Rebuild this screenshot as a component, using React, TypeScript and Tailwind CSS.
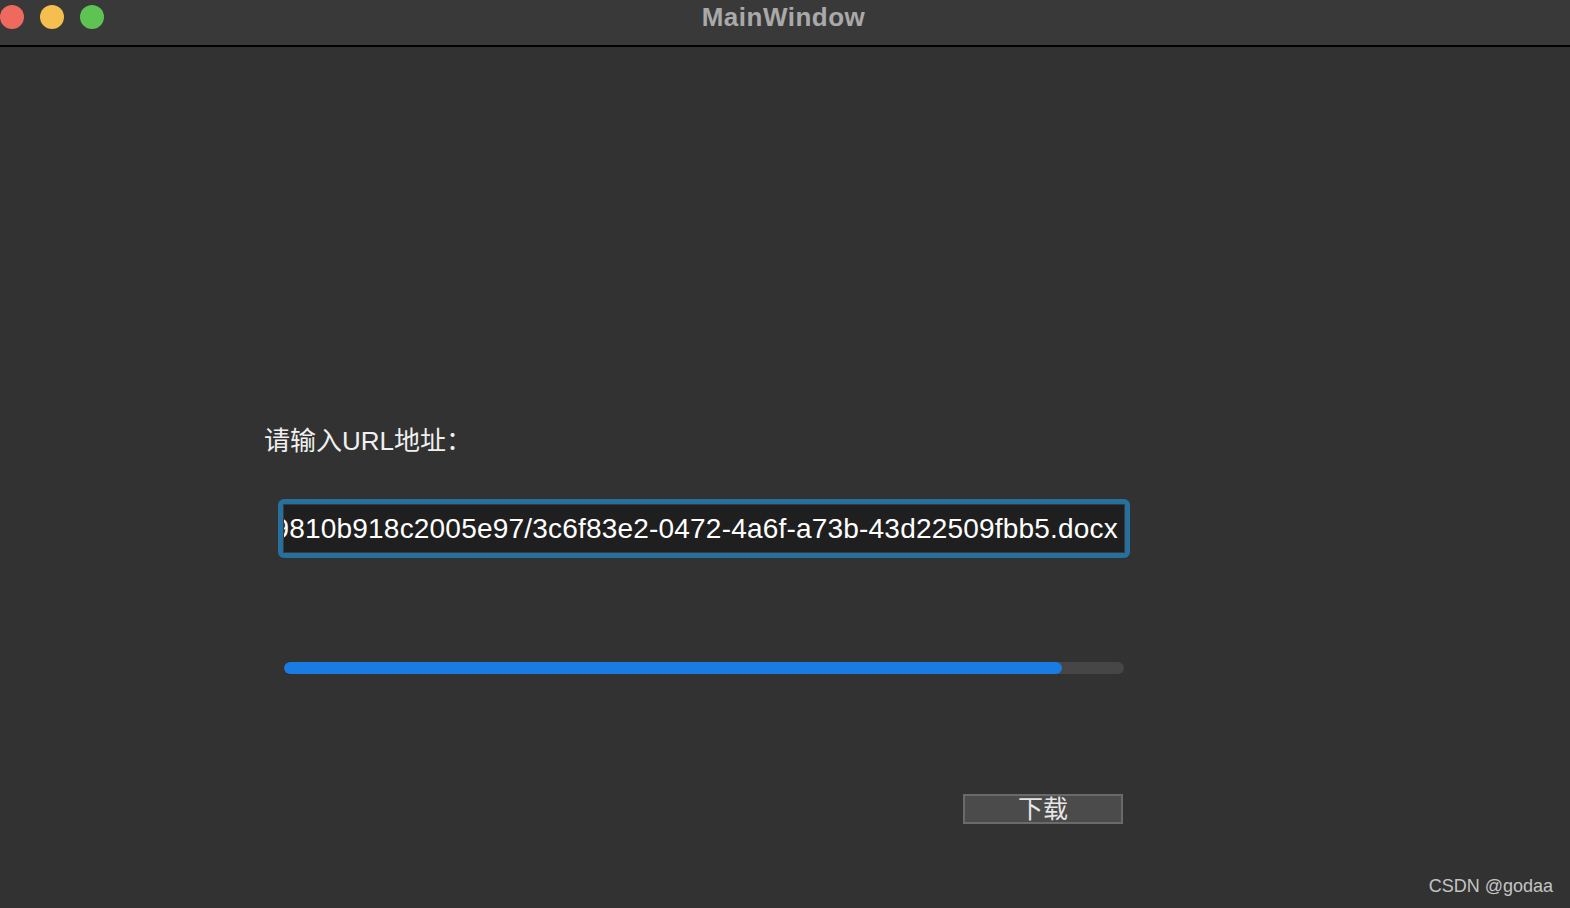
import React from "react";

const url =
  "https://files.example.com/upload/2021/attachments/7f3e1c9810b918c2005e97/3c6f83e2-0472-4a6f-a73b-43d22509fbb5.docx";

export default function App() {
  return (
    <div
      className="w-[1570px] h-[908px] bg-[#323232] flex flex-col overflow-hidden"
      style={{ fontFamily: '"Liberation Sans", "Noto Sans CJK SC", sans-serif' }}
    >
      {/* title bar */}
      <div className="relative h-[47px] shrink-0 bg-[#393939] border-b-2 border-black flex items-center justify-center">
        <div className="absolute left-0 top-[5px] flex gap-[16px]">
          <span className="w-[24px] h-[24px] rounded-full bg-[#ee6a5e]" />
          <span className="w-[24px] h-[24px] rounded-full bg-[#f5bf4f]" />
          <span className="w-[24px] h-[24px] rounded-full bg-[#5dc453]" />
        </div>
        <span className="text-[26px] font-bold text-[#a9a9a9] -mt-[11px] ml-[-3px] tracking-[0.5px]">MainWindow</span>
      </div>

      {/* body */}
      <div className="relative flex-1 flex flex-col">
        <div className="pl-[264px] pt-[376px] text-[26px] text-[#f0f0f0] leading-[36px]">请输入URL地址：</div>

        <div className="ml-[278px] mt-[40px] w-[852px] h-[59px] rounded-[6px] bg-[#25709f] p-[5px]">
          <div className="h-full bg-[#1f1f1f] border border-[#3a3a3a] flex justify-end items-center overflow-hidden whitespace-nowrap pr-[6px]">
            <span className="text-[28px] text-white tracking-[0.2px]">{url}</span>
          </div>
        </div>

        <div className="ml-[284px] mt-[104px] w-[840px] h-[12px] rounded-full bg-[#464646] overflow-hidden">
          <div className="h-full rounded-full bg-[#1a7be2]" style={{ width: `${(778 / 840) * 100}%` }} />
        </div>

        <div className="ml-[963px] mt-[120px] w-[160px] h-[30px] bg-[#4b4b4b] border-2 border-[#6a6a6a] flex items-center justify-center text-[25px] text-[#e6e6e6] leading-none">
          下载
        </div>

        <div className="absolute right-[17px] bottom-[8px] text-[18px] text-[#c4c4c4]">CSDN @godaa</div>
      </div>
    </div>
  );
}
